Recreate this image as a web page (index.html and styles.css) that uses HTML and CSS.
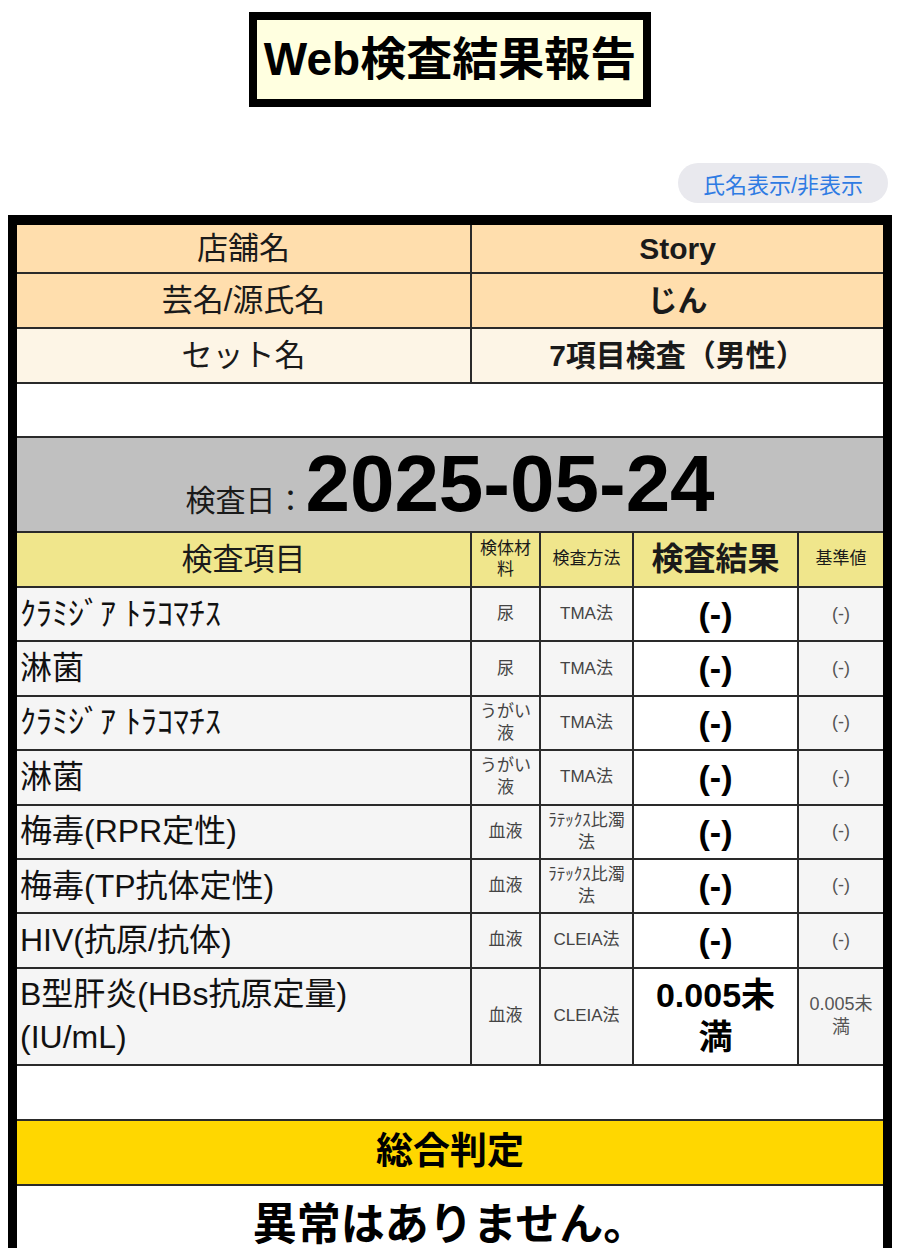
FILE: index.html
```html
<!DOCTYPE html>
<html lang="ja">
<head>
<meta charset="utf-8">
<title>Web検査結果報告</title>
<link rel="stylesheet" href="styles.css">
</head>
<body>
<header class="title-wrap"><h1 class="title">Web検査結果報告</h1></header>
<div class="toolbar"><button class="toggle" type="button">氏名表示/非表示</button></div>
<div class="sheet">
<table class="report">
<colgroup><col class="c1"><col class="c2"><col class="c3"><col class="c4"><col class="c5"></colgroup>
<tr class="r-shop"><th class="lbl">店舗名</th><td class="val" colspan="4">Story</td></tr>
<tr class="r-name"><th class="lbl">芸名/源氏名</th><td class="val" colspan="4">じん</td></tr>
<tr class="r-set"><th class="lbl">セット名</th><td class="val" colspan="4">7項目検査（男性）</td></tr>
<tr class="r-gap"><td class="blank" colspan="5"></td></tr>
<tr class="r-date"><td class="date-cell" colspan="5"><span class="date-label">検査日：</span><span class="date">2025-05-24</span></td></tr>
<tr class="r-head"><th class="h-item">検査項目</th><th class="h-small">検体材料</th><th class="h-small">検査方法</th><th class="h-result">検査結果</th><th class="h-small">基準値</th></tr>
<tr class="data"><td class="item">ｸﾗﾐｼﾞｱ ﾄﾗｺﾏﾁｽ</td><td class="sm">尿</td><td class="sm">TMA法</td><td class="res">(-)</td><td class="ref">(-)</td></tr>
<tr class="data"><td class="item">淋菌</td><td class="sm">尿</td><td class="sm">TMA法</td><td class="res">(-)</td><td class="ref">(-)</td></tr>
<tr class="data"><td class="item">ｸﾗﾐｼﾞｱ ﾄﾗｺﾏﾁｽ</td><td class="sm">うがい液</td><td class="sm">TMA法</td><td class="res">(-)</td><td class="ref">(-)</td></tr>
<tr class="data"><td class="item">淋菌</td><td class="sm">うがい液</td><td class="sm">TMA法</td><td class="res">(-)</td><td class="ref">(-)</td></tr>
<tr class="data"><td class="item">梅毒(RPR定性)</td><td class="sm">血液</td><td class="sm">ﾗﾃｯｸｽ比濁法</td><td class="res">(-)</td><td class="ref">(-)</td></tr>
<tr class="data"><td class="item">梅毒(TP抗体定性)</td><td class="sm">血液</td><td class="sm">ﾗﾃｯｸｽ比濁法</td><td class="res">(-)</td><td class="ref">(-)</td></tr>
<tr class="data"><td class="item">HIV(抗原/抗体)</td><td class="sm">血液</td><td class="sm">CLEIA法</td><td class="res">(-)</td><td class="ref">(-)</td></tr>
<tr class="data-tall"><td class="item">B型肝炎(HBs抗原定量)<br>(IU/mL)</td><td class="sm">血液</td><td class="sm">CLEIA法</td><td class="res">0.005未満</td><td class="ref">0.005未満</td></tr>
<tr class="r-gap2"><td class="blank" colspan="5"></td></tr>
<tr class="r-verdict-head"><th class="verdict-head" colspan="5">総合判定</th></tr>
<tr class="r-verdict"><td class="verdict" colspan="5">異常はありません。</td></tr>
</table>
</div>
</body>
</html>
```

FILE: styles.css
```css
* { box-sizing: border-box; }

body {
  margin: 8px;
  font-family: "Liberation Sans", "Noto Sans CJK JP", sans-serif;
  color: #111;
  background: #fff;
}

.title-wrap {
  text-align: center;
  padding-top: 4px;
}

.title {
  display: inline-block;
  margin: 0;
  border: 8px solid #000;
  background: #ffffe0;
  color: #000;
  font-size: 46px;
  font-weight: 700;
  line-height: 54px;
  padding: 12px 7px 13px;
}

.toolbar {
  display: flex;
  justify-content: flex-end;
  margin-top: 56px;
  padding-right: 4px;
}

.toggle {
  font-family: "Liberation Sans", "Noto Sans CJK JP", sans-serif;
  font-size: 22px;
  color: #2f7be3;
  background: #e9e9ee;
  border: 0;
  border-radius: 20px;
  height: 40px;
  padding: 0 25px;
}

.sheet {
  margin-top: 12px;
  border: 9px solid #000;
  border-top-width: 10px;
  border-right-width: 10px;
}

.report {
  width: 100%;
  border-collapse: collapse;
  border-style: hidden;
  table-layout: fixed;
}

.c1 { width: 454px; }
.c2 { width: 69px; }
.c3 { width: 93px; }
.c4 { width: 165px; }
.c5 { width: 85px; }

.report td,
.report th {
  border: 2px solid #2a2a2a;
  padding: 0 3px;
  text-align: center;
  vertical-align: middle;
  font-weight: 400;
  color: #1a1a1a;
}

/* header info rows */
.r-shop { height: 48px; }
.r-name { height: 55px; }
.r-set { height: 55px; }
.r-shop td, .r-shop th, .r-name td, .r-name th { background: #ffdead; }
.r-set td, .r-set th { background: #fdf5e6; }

.lbl {
  font-size: 31px;
  line-height: 1.2;
}

.report .val {
  font-size: 30px;
  font-weight: 700;
  line-height: 1.2;
}

.r-gap { height: 54px; }
.r-gap2 { height: 55px; }
.blank { background: #fff; }

/* date row */
.r-date { height: 95px; }
.report .date-cell {
  background: #c0c0c0;
  vertical-align: bottom;
  padding-bottom: 7px;
  line-height: 1;
}
.date-label {
  font-size: 30px;
  color: #1a1a1a;
}
.date {
  font-size: 80px;
  font-weight: 700;
  color: #000;
}

/* column headers */
.r-head { height: 55px; }
.r-head th { background: #f0e68c; }
.h-item {
  font-size: 31px;
  line-height: 1.2;
}
.report .h-result {
  font-size: 32px;
  font-weight: 700;
  line-height: 1.2;
}
.h-small {
  font-size: 17px;
  line-height: 1.2;
}

/* data rows */
.data { height: 54.4px; }
.data-tall { height: 97px; }

.report .item {
  text-align: left;
  font-size: 32px;
  line-height: 1.35;
  padding-left: 3px;
  background: #f5f5f5;
  color: #111;
}

.report .sm {
  font-size: 17px;
  line-height: 1.3;
  background: #f5f5f5;
  color: #444;
}

.report .res {
  font-size: 34px;
  font-weight: 700;
  line-height: 1.25;
  padding: 0 6px;
  background: #fff;
  color: #000;
}

.report .ref {
  font-size: 18px;
  line-height: 1.3;
  padding: 0 4px;
  background: #f5f5f5;
  color: #555;
}

/* verdict */
.r-verdict-head { height: 65px; }
.report .verdict-head {
  background: #ffd700;
  font-size: 37px;
  font-weight: 700;
  line-height: 1.2;
  color: #000;
}

.r-verdict { height: 90px; }
.report .verdict {
  background: #fff;
  font-size: 44px;
  font-weight: 700;
  line-height: 1.2;
  color: #000;
  vertical-align: top;
  padding-top: 13px;
}
```
